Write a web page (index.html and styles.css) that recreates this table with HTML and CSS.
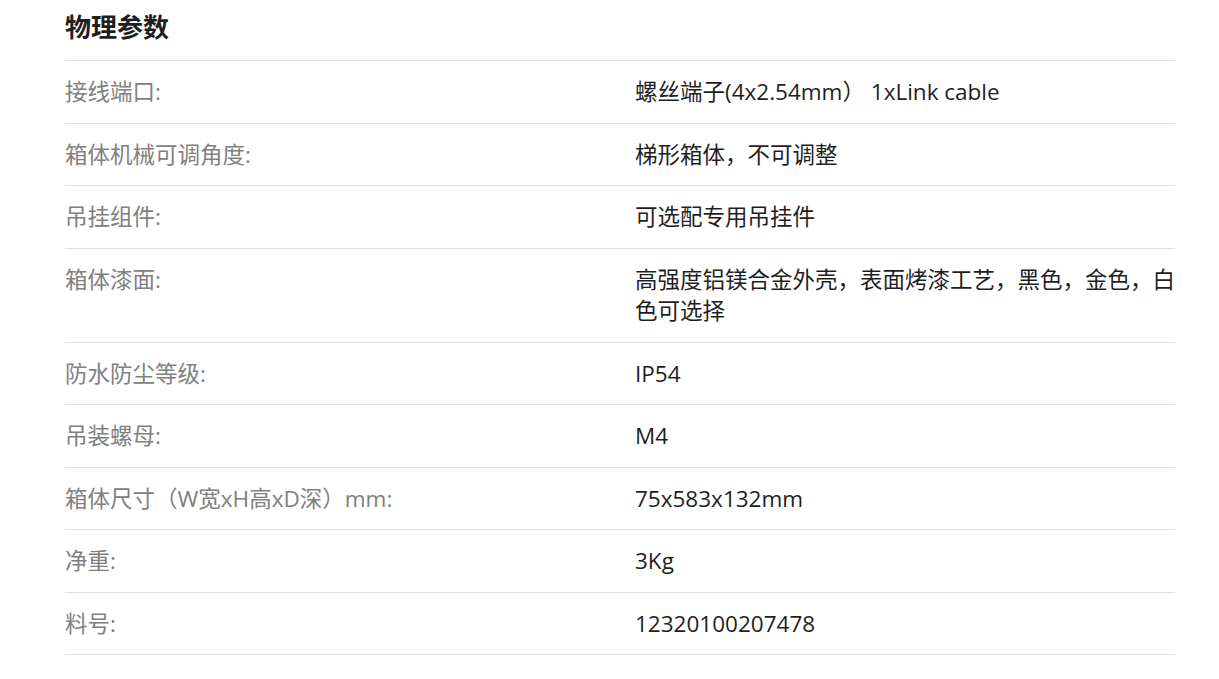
FILE: index.html
```html
<!DOCTYPE html>
<html lang="zh-CN">
<head>
<meta charset="utf-8">
<title>物理参数</title>
<link rel="stylesheet" href="styles.css">
</head>
<body>
<section class="spec">
  <h2 class="spec-title">物理参数</h2>
  <div class="spec-table">
    <div class="spec-row"><div class="spec-label">接线端口:</div><div class="spec-value">螺丝端子(4x2.54mm） 1xLink cable</div></div>
    <div class="spec-row"><div class="spec-label">箱体机械可调角度:</div><div class="spec-value">梯形箱体，不可调整</div></div>
    <div class="spec-row"><div class="spec-label">吊挂组件:</div><div class="spec-value">可选配专用吊挂件</div></div>
    <div class="spec-row"><div class="spec-label">箱体漆面:</div><div class="spec-value">高强度铝镁合金外壳，表面烤漆工艺，黑色，金色，白色可选择</div></div>
    <div class="spec-row"><div class="spec-label">防水防尘等级:</div><div class="spec-value">IP54</div></div>
    <div class="spec-row"><div class="spec-label">吊装螺母:</div><div class="spec-value">M4</div></div>
    <div class="spec-row"><div class="spec-label">箱体尺寸（W宽xH高xD深）mm:</div><div class="spec-value">75x583x132mm</div></div>
    <div class="spec-row"><div class="spec-label">净重:</div><div class="spec-value">3Kg</div></div>
    <div class="spec-row"><div class="spec-label">料号:</div><div class="spec-value">12320100207478</div></div>
  </div>
</section>
</body>
</html>
```
FILE: styles.css
```css
html, body {
  margin: 0;
  padding: 0;
  background: #ffffff;
}
body {
  font-family: "Open Sans", "Noto Sans CJK SC", sans-serif;
}
.spec {
  width: 1110px;
  margin-left: 65px;
}
.spec-title {
  margin: 0;
  height: 60px;
  line-height: 54px;
  font-size: 26px;
  font-weight: 700;
  color: #1f1f1f;
  border-bottom: 1px solid #e0e0e0;
}
.spec-row {
  display: grid;
  grid-template-columns: 570px 1fr;
  padding: 15px 0;
  border-bottom: 1px solid #e0e0e0;
  font-size: 22.5px;
  line-height: 31.5px;
}
.spec-label {
  color: #808080;
}
.spec-value {
  color: #1f1f1f;
  text-align: justify;
  word-break: break-all;
}
```
